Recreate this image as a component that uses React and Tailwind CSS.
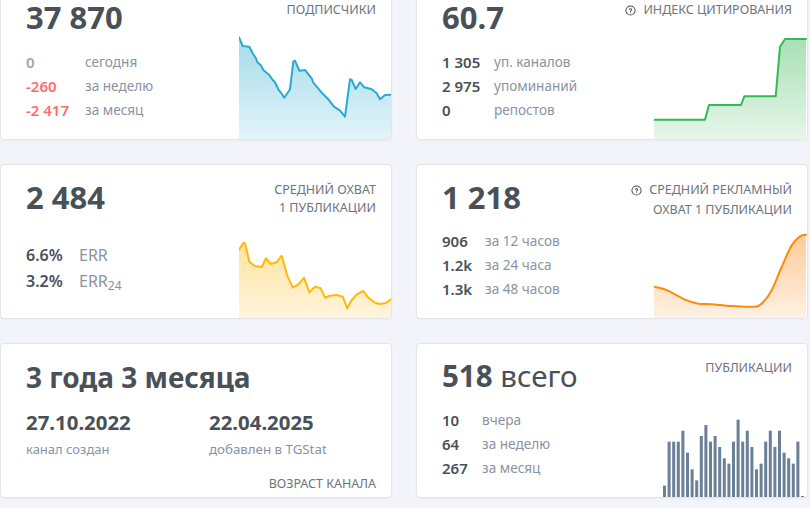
const FONT = { fontFamily: '"Noto Sans", "Open Sans", sans-serif' };

const Q = () => (
  <svg width="11" height="11" viewBox="0 0 24 24" fill="none" stroke="#495057" strokeWidth="2.2" strokeLinecap="round" className="shrink-0">
    <circle cx="12" cy="12" r="10" />
    <path d="M9.5 9.5a2.5 2.5 0 0 1 4.8 1c0 1.6-2.3 2-2.3 3.2" />
    <path d="M12 17h.01" />
  </svg>
);

function pathOf(pts, smooth) {
  if (!smooth) return "M" + pts.map((p) => p[0].toFixed(1) + " " + p[1].toFixed(1)).join("L");
  let d = "M" + pts[0][0].toFixed(1) + " " + pts[0][1].toFixed(1);
  for (let i = 0; i < pts.length - 1; i++) {
    const a = pts[Math.max(i - 1, 0)], b = pts[i], c = pts[i + 1], e = pts[Math.min(i + 2, pts.length - 1)];
    d += `C${(b[0] + (c[0] - a[0]) / 6).toFixed(1)} ${(b[1] + (c[1] - a[1]) / 6).toFixed(1)} ${(c[0] - (e[0] - b[0]) / 6).toFixed(1)} ${(c[1] - (e[1] - b[1]) / 6).toFixed(1)} ${c[0].toFixed(1)} ${c[1].toFixed(1)}`;
  }
  return d;
}

function Area({ id, raw, x0, y0, scale = 3, w, h, line, top, bottom, smooth }) {
  const pts = raw.map(([x, y]) => [(x - x0) / scale, (y - y0) / scale]);
  const d = pathOf(pts, smooth);
  return (
    <svg width={w} height={h} viewBox={`0 0 ${w} ${h}`} className="absolute right-0 bottom-0 rounded-br-[4px]">
      <defs>
        <linearGradient id={id} x1="0" y1="0" x2="0" y2="1">
          <stop offset="0" stopColor={top} />
          <stop offset="1" stopColor={bottom} />
        </linearGradient>
      </defs>
      <path d={`${d}L${pts[pts.length - 1][0]} ${h}L0 ${h}Z`} fill={`url(#${id})`} />
      <path d={d} fill="none" stroke={line} strokeWidth="2" strokeLinejoin="round" strokeLinecap="round" />
    </svg>
  );
}

const blue = [[27,22],[38,48],[58,50],[68,70],[78,85],[82,97],[92,105],[100,120],[118,135],[128,150],[135,157],[145,178],[152,187],[163,203],[180,178],[190,95],[195,92],[208,122],[225,120],[245,145],[250,158],[262,172],[275,188],[295,208],[312,230],[330,242],[345,260],[360,148],[365,150],[377,177],[390,157],[403,172],[425,178],[440,190],[450,208],[465,195],[483,194]];
const green = [[747,359],[900,359],[912,315],[1008,315],[1018,289],[1112,289],[1125,140],[1140,117],[1203,117]];
const yellow = [[27,44],[40,24],[45,25],[58,80],[75,93],[95,96],[108,70],[122,87],[140,82],[155,62],[172,122],[188,158],[205,148],[222,128],[238,172],[255,155],[272,160],[285,188],[300,182],[320,180],[338,185],[352,220],[365,195],[380,178],[400,168],[415,188],[435,203],[450,207],[468,204],[483,193]];
const orange = [[747,379],[775,385],[800,397],[840,418],[880,430],[920,432],[980,437],[1050,439],[1075,425],[1100,390],[1130,320],[1160,255],[1185,228],[1203,223]];
const tops = [227,95,95,95,62,128,178,211,78,45,95,78,111,145,161,95,29,95,62,111,178,161,95,62,111,62,128,145,161,95,258];

const Bars = () => (
  <svg width="145" height="80" viewBox="0 0 145 80" className="absolute right-0 bottom-0">
    {tops.map((t, i) => {
      const h = (261 - t) / 3;
      return <rect key={i} x={1 + i * 4.6} y={80 - h} width="3" height={h} fill="#6b7f96" />;
    })}
  </svg>
);

function Card({ children, className = "" }) {
  return (
    <div className={"relative h-[155px] bg-white rounded-[4px] border border-[#e2e5eb] shadow-[0_1px_3px_rgba(30,40,70,0.04)] pl-[25px] pr-[15px] " + className}>
      {children}
    </div>
  );
}

const Big = ({ children, className = "text-[31px]" }) => (
  <div className={"leading-[36px] font-bold text-[#495057] whitespace-nowrap " + className}>{children}</div>
);

const Label = ({ children, icon, className = "" }) => (
  <div className={"text-[12.5px] leading-[18px] text-[#6c747d] text-right whitespace-nowrap uppercase " + className}>
    {icon ? <span className="inline-flex items-center gap-[7px]"><Q />{children}</span> : children}
  </div>
);

function Rows({ rows, col, className = "" }) {
  return (
    <div className={"flex flex-col " + className}>
      {rows.map(([v, l, c]) => (
        <div key={l} className="flex items-center h-[24px] whitespace-nowrap">
          <span className={"text-[15px] font-semibold " + (c || "text-[#495057]")} style={{ width: col }}>{v}</span>
          <span className="text-[13.6px] text-[#8a93a0]">{l}</span>
        </div>
      ))}
    </div>
  );
}

export default function App() {
  return (
    <div style={FONT} className="w-[810px] h-[508px] overflow-hidden bg-[#f3f4f9]">
      <div className="grid grid-cols-[392px_392px] gap-x-[24px] gap-y-[24px] mt-[-15px]">
        <Card>
          <div className="flex justify-between pt-[13px]">
            <Big>37 870</Big>
            <Label className="mt-[2px]">Подписчики</Label>
          </div>
          <Rows className="mt-[15px]" col={59} rows={[["0", "сегодня", "text-[#9aa5b1]"], ["-260", "за неделю", "text-[#ff6b6b]"], ["-2 417", "за месяц", "text-[#ff6b6b]"]]} />
          <Area id="a1" raw={blue} x0={27} y0={-18} w={152} h={115} line="#2aa9d2" top="#a5dbeb" bottom="#e2f4f9" />
        </Card>
        <Card>
          <div className="flex justify-between pt-[13px]">
            <Big>60.7</Big>
            <Label className="mt-[2px]" icon>Индекс цитирования</Label>
          </div>
          <Rows className="mt-[15px]" col={52} rows={[["1 305", "уп. каналов"], ["2 975", "упоминаний"], ["0", "репостов"]]} />
          <Area id="a2" raw={green} x0={747} y0={72} w={153} h={115} line="#35b85a" top="#a8e0b5" bottom="#e6f6ea" />
        </Card>
        <Card>
          <div className="flex justify-between pt-[14px]">
            <Big>2 484</Big>
            <Label className="mt-[2px]">Средний охват<br />1 публикации</Label>
          </div>
          <div className="flex flex-col mt-[25px]">
            <div className="flex items-center h-[26px] text-[16px]"><span className="w-[53px] font-semibold text-[#495057]">6.6%</span><span className="text-[#8a93a0]">ERR</span></div>
            <div className="flex items-center h-[26px] text-[16px]"><span className="w-[53px] font-semibold text-[#495057]">3.2%</span><span className="text-[#8a93a0]">ERR<sub className="text-[12px]">24</sub></span></div>
          </div>
          <Area id="a3" raw={yellow} x0={27} y0={-60} w={152} h={103} line="#ffb908" top="#ffe3a0" bottom="#fff5dd" />
        </Card>
        <Card>
          <div className="flex justify-between pt-[14px]">
            <Big>1 218</Big>
            <div>
              <Label className="mt-[2px]" icon>Средний рекламный</Label>
              <Label>охват 1 публикации</Label>
            </div>
          </div>
          <Rows className="mt-[11px]" col={43} rows={[["906", "за 12 часов"], ["1.2k", "за 24 часа"], ["1.3k", "за 48 часов"]]} />
          <Area id="a4" raw={orange} x0={747} y0={209} w={153} h={88} line="#ff8a0a" top="#ffcb98" bottom="#fff1e4" smooth />
        </Card>
        <Card>
          <div className="pt-[15px]">
            <Big className="text-[28px]">3 года 3 месяца</Big>
          </div>
          <div className="grid grid-cols-[183px_1fr] mt-[14px]">
            <div>
              <div className="text-[20.4px] leading-[26px] font-bold text-[#495057]">27.10.2022</div>
              <div className="text-[13px] leading-[20px] mt-[4px] text-[#8a93a0]">канал создан</div>
            </div>
            <div>
              <div className="text-[20.4px] leading-[26px] font-bold text-[#495057]">22.04.2025</div>
              <div className="text-[13.3px] leading-[20px] mt-[4px] text-[#8a93a0]">добавлен в TGStat</div>
            </div>
          </div>
          <Label className="mt-[16px]">Возраст канала</Label>
        </Card>
        <Card>
          <div className="flex justify-between pt-[14px]">
            <div className="text-[29.5px] leading-[36px] text-[#495057] whitespace-nowrap"><span className="font-bold">518</span> всего</div>
            <Label className="mt-[1px]">Публикации</Label>
          </div>
          <Rows className="mt-[14px]" col={40} rows={[["10", "вчера"], ["64", "за неделю"], ["267", "за месяц"]]} />
          <Bars />
        </Card>
      </div>
    </div>
  );
}
